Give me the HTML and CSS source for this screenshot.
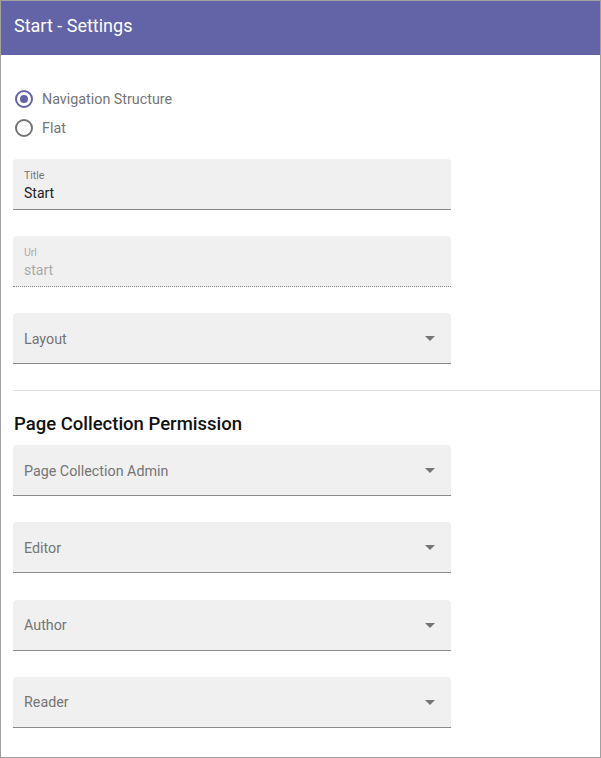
FILE: index.html
```html
<!DOCTYPE html>
<html>
<head>
<meta charset="utf-8">
<link rel="stylesheet" href="styles.css">
</head>
<body>
<div class="window">
  <header class="header">Start - Settings</header>
  <main class="content">
    <div class="radios">
      <label class="radio-row"><span class="radio checked"><span class="dot"></span></span><span class="radio-label">Navigation Structure</span></label>
      <label class="radio-row"><span class="radio"></span><span class="radio-label">Flat</span></label>
    </div>
    <div class="field labeled">
      <span class="flabel">Title</span>
      <span class="fvalue">Start</span>
    </div>
    <div class="field labeled disabled">
      <span class="flabel">Url</span>
      <span class="fvalue">start</span>
    </div>
    <div class="field select">
      <span class="placeholder">Layout</span>
      <span class="arrow"></span>
    </div>
    <hr class="divider">
    <h2 class="section-title">Page Collection Permission</h2>
    <div class="field select perm">
      <span class="placeholder">Page Collection Admin</span>
      <span class="arrow"></span>
    </div>
    <div class="field select perm">
      <span class="placeholder">Editor</span>
      <span class="arrow"></span>
    </div>
    <div class="field select perm">
      <span class="placeholder">Author</span>
      <span class="arrow"></span>
    </div>
    <div class="field select perm">
      <span class="placeholder">Reader</span>
      <span class="arrow"></span>
    </div>
  </main>
</div>
</body>
</html>
```
FILE: styles.css
```css
html, body {
  margin: 0;
  padding: 0;
  background: #fff;
}
body {
  font-family: Roboto, "Liberation Sans", sans-serif;
}
.window {
  width: 601px;
  height: 758px;
  box-sizing: border-box;
  border: 1px solid #a0a0a0;
  overflow: hidden;
  display: flex;
  flex-direction: column;
}
.header {
  height: 54px;
  flex: none;
  background: #6264a7;
  color: #fff;
  font-size: 18px;
  font-weight: 400;
  display: flex;
  align-items: center;
  padding-left: 13px;
  padding-bottom: 5px;
  box-sizing: border-box;
}
.content {
  padding: 29px 0 0 12px;
}
.radios {
  display: flex;
  flex-direction: column;
  margin-bottom: 17px;
}
.radio-row {
  height: 29px;
  display: flex;
  align-items: center;
  gap: 9px;
  padding-left: 2px;
}
.radio {
  width: 18px;
  height: 18px;
  box-sizing: border-box;
  border: 2px solid #737373;
  border-radius: 50%;
  display: flex;
  align-items: center;
  justify-content: center;
}
.radio.checked {
  border-color: #6264a7;
}
.dot {
  width: 8px;
  height: 8px;
  border-radius: 50%;
  background: #6264a7;
}
.radio-label {
  font-size: 14.3px;
  color: #757575;
}
.field {
  width: 438px;
  height: 51px;
  box-sizing: border-box;
  background: #f0f0f0;
  border-radius: 4px 4px 0 0;
  border-bottom: 1px solid #8a8a8a;
  margin-bottom: 26px;
}
.field.perm {
  margin-bottom: 26.33px;
}
.field.labeled {
  display: flex;
  flex-direction: column;
  padding: 11px 11px 0;
}
.flabel {
  font-size: 10.5px;
  line-height: 12px;
  color: #757575;
}
.fvalue {
  font-size: 14px;
  line-height: 17px;
  margin-top: 3px;
  color: #222;
}
.field.disabled {
  border-bottom: 1px dotted #8a8a8a;
}
.field.disabled .flabel,
.field.disabled .fvalue {
  color: #aaa;
}
.field.select {
  display: flex;
  align-items: center;
  justify-content: space-between;
  padding: 1px 16px 0 11px;
}
.placeholder {
  font-size: 14.3px;
  color: #757575;
}
.arrow {
  width: 0;
  height: 0;
  border-left: 5px solid transparent;
  border-right: 5px solid transparent;
  border-top: 5px solid #757575;
}
.divider {
  border: 0;
  border-top: 1px solid #e0e0e0;
  margin: 1px 0 0 0;
}
.section-title {
  font-size: 18.5px;
  font-weight: 500;
  color: #111;
  margin: 22px 0 10px 1px;
  line-height: 22px;
}
```
